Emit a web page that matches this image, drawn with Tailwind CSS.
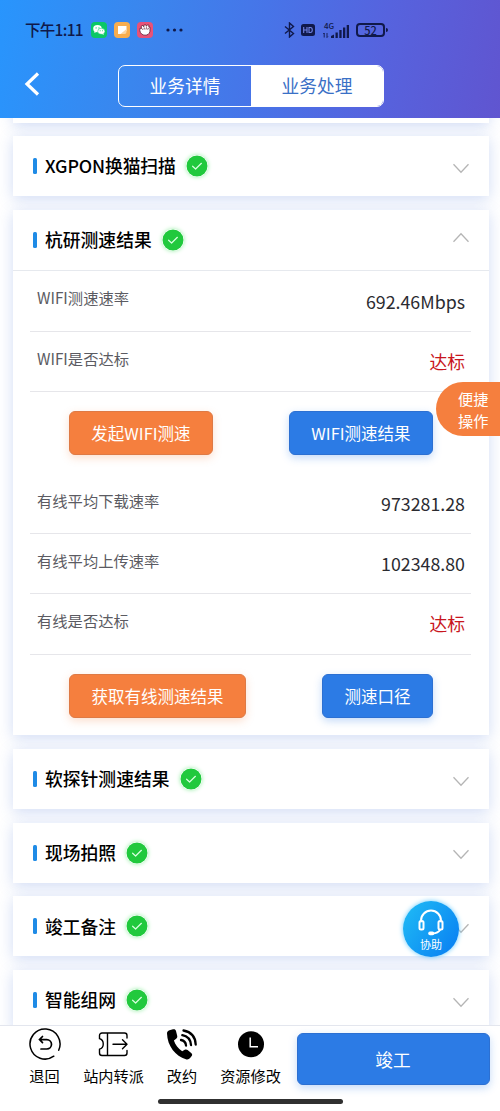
<!DOCTYPE html>
<html lang="zh-CN">
<head>
<meta charset="utf-8">
<title>业务处理</title>
<script src="https://cdn.jsdelivr.net/npm/@tailwindcss/browser@4"></script>
</head>
<body class="bg-white">
<svg class="hidden">
  <symbol id="check" viewBox="0 0 22 22"><circle cx="11" cy="11" r="10.5" fill="#21c93d"/><path d="M6.600 11.200l3 2.800 5.800-5.700" fill="none" stroke="#d9ffe0" stroke-width="1.200" stroke-linecap="round" stroke-linejoin="round"/></symbol>
  <symbol id="down" viewBox="0 0 18 11"><path d="M1.500 1.200L9 9.200l7.500-8" fill="none" stroke="#b5b5b5" stroke-width="1.300"/></symbol>
</svg>
<div class="relative flex h-[1111px] w-[500px] flex-col overflow-hidden bg-white font-['Noto_Sans_CJK_SC',sans-serif] text-black">
  <header class="h-[118px] shrink-0 bg-linear-[100deg,#2895fd_0%,#3a86ee_28%,#4774e8_52%,#5663de_75%,#6055d0_100%]">
    <div class="flex h-[60px] items-center pl-[25px] text-[#10194a]">
      <span class="w-[59px] text-[15.500px] leading-none font-medium tracking-[-0.700px] whitespace-nowrap">下午1:11</span>
      <div class="ml-[7px] flex items-center gap-[7px]">
        <svg class="size-4" viewBox="0 0 16 16"><rect width="16" height="16" rx="4" fill="#0bc866"/><ellipse cx="6.500" cy="6.700" rx="4.300" ry="3.600" fill="#fff"/><ellipse cx="10.300" cy="9.300" rx="3.600" ry="3" fill="#fff" stroke="#0bc866" stroke-width=".5"/><path d="M3.700 9l-.4 2 2-1zM12 11l1.200 1.700-2.500-.7z" fill="#fff"/><g fill="#0bc866"><circle cx="5.100" cy="5.900" r=".6"/><circle cx="8" cy="5.900" r=".6"/><circle cx="9.200" cy="8.700" r=".5"/><circle cx="11.500" cy="8.700" r=".5"/></g></svg>
        <svg class="size-4" viewBox="0 0 16 16"><rect width="16" height="16" rx="4" fill="#f8ad4e"/><path d="M4 4h8.500v4.500L9.500 12H4z" fill="#fff"/><path d="M6.500 12l6-5v3a2 2 0 0 1-2 2z" fill="#fbd6a3"/></svg>
        <svg class="size-4" viewBox="0 0 16 16"><rect width="16" height="16" rx="4" fill="#e85278"/><path d="M2.800 8.500L3 6.200l1.500.3-.3-2.300 1.600-.8 1 1.400L6.900 3l1.800-.3.700 1.600 1-1.500 1.600.5-.2 1.800 1.300.2-.2 4.200C12.500 12 10.500 13.200 8 13.200S3.200 11.500 2.800 8.500z" fill="#fff" stroke="#642135" stroke-width=".8"/><path d="M5 6.500l.8 1.300M7.200 5.500v2M9.500 5.300L9 7.500M11.400 6l-.7 1.700" stroke="#642135" stroke-width=".8"/></svg>
      </div>
      <svg class="ml-[13px] h-1 w-[17px]" viewBox="0 0 17 4" fill="currentColor"><circle cx="2" cy="2" r="1.600"/><circle cx="8.500" cy="2" r="1.600"/><circle cx="15" cy="2" r="1.600"/></svg>
      <svg class="ml-[101px] h-4 w-[11px]" viewBox="0 0 11 16" fill="none" stroke="currentColor" stroke-width="1.400"><path d="M1 4.500l8.500 7L5.500 15V1l4 3.500-8.500 7"/></svg>
      <svg class="ml-[6px] h-3 w-[14px]" viewBox="0 0 14 12"><rect width="14" height="12" rx="2.500" fill="currentColor"/><path d="M2.700 3v6M6 3v6M2.700 6H6M8 3.500v5h1.400c2.500 0 2.500-5 0-5z" fill="none" stroke="#7183e4" stroke-width="1.100"/></svg>
      <div class="ml-2 flex h-[15px] w-[27px] flex-col">
        <span class="h-[6px] pl-[1px] text-[8px] leading-[5px] font-medium">4G</span>
        <svg class="-mt-[5px] h-[14px] w-[27px] shrink-0" viewBox="0 0 27 14" fill="currentColor"><path d="M1.200 9v4.500M.3 10l.9-1M4 9v4.500m0 0l.9-1" stroke="currentColor" stroke-width=".9"/><path d="M8 14v-2l3-1.500V14z"/><rect x="12.500" y="8.500" width="2.300" height="5.500"/><rect x="16.300" y="6" width="2.300" height="8"/><rect x="20" y="3.500" width="2.300" height="10.500"/><rect x="23.700" y="1" width="2.300" height="13"/></svg>
      </div>
      <div class="ml-[6px] flex h-[14px] w-[29px] items-center justify-center rounded-[4px] border-2 border-current text-[11px] leading-none font-medium">52</div>
      <div class="ml-[1px] h-1 w-[2px] rounded-r bg-current"></div>
    </div>
    <div class="flex items-center pt-[5px] pl-[24px]">
      <svg class="mb-[5px] h-6 w-4" viewBox="0 0 16 24" fill="none" stroke="#fff" stroke-width="3.200"><path d="M14 1.500L3 12l11 10.500"/></svg>
      <div class="ml-[78px] flex h-[42px] w-[266px] overflow-hidden rounded-[7px] border border-white text-[17.700px]">
        <div class="flex w-[132px] items-center justify-center pb-[1px] text-white">业务详情</div>
        <div class="flex flex-1 items-center justify-center bg-white pb-[1px] text-[#3a70c6]">业务处理</div>
      </div>
    </div>
  </header>

  <main class="flex h-[907px] shrink-0 flex-col gap-[13.700px] overflow-hidden pr-[11px] pl-[13px]">
    <section class="-mt-[14px] h-[18.500px] shrink-0 bg-white shadow-[0_3px_14px_rgba(70,115,215,0.25)]"></section>

    <section class="flex h-[60px] shrink-0 items-center bg-white pr-[19px] pl-[20px] shadow-[0_3px_14px_rgba(70,115,215,0.25)]">
      <i class="h-4 w-1 rounded-[1.500px] bg-[#1f8be6]"></i>
      <h2 class="ml-2 text-[17.800px] leading-none font-medium tracking-[-0.120px]">XGPON换猫扫描</h2>
      <svg class="ml-[10px] size-[22px] rounded-full shadow-[0_0_4px_#9beeaa]"><use href="#check"/></svg>
      <svg class="mt-1 ml-auto h-[11px] w-[18px]"><use href="#down"/></svg>
    </section>

    <section class="h-[525.500px] shrink-0 bg-white shadow-[0_3px_14px_rgba(70,115,215,0.25)]">
      <div class="flex h-[61px] items-center border-b border-[#e6e9ee] pr-[19px] pl-[20px]">
        <i class="h-4 w-1 rounded-[1.500px] bg-[#1f8be6]"></i>
        <h2 class="ml-2 text-[17.800px] leading-none font-medium">杭研测速结果</h2>
        <svg class="ml-[10px] size-[22px] rounded-full shadow-[0_0_4px_#9beeaa]"><use href="#check"/></svg>
        <svg class="mb-1 ml-auto h-[11px] w-[18px] rotate-180"><use href="#down"/></svg>
      </div>
      <div class="pt-[0.800px] pr-[18px] pl-[17px]">
        <div class="flex h-[60.300px] justify-between border-b border-[#e6e6ea] pr-[6px] pl-[7px]"><span class="pt-[14.700px] text-[15.300px] leading-[22px] text-[#5b5b62]">WIFI测速速率</span><span class="pt-[16px] text-[17.800px] leading-[26px] text-[#2b2b30]">692.46Mbps</span></div>
        <div class="flex h-[60.300px] justify-between border-b border-[#e6e6ea] pr-[6px] pl-[7px]"><span class="pt-[14.700px] text-[15.300px] leading-[22px] text-[#5b5b62]">WIFI是否达标</span><span class="pt-[16px] text-[17.800px] leading-[26px] text-[#c8161d]">达标</span></div>
        <div class="flex h-[81.600px] items-start justify-between pt-[19px] pr-[38px] pl-[39px] text-[16.500px] text-white">
          <div class="flex h-[44px] w-[144px] items-center justify-center rounded-[6px] border border-[#de7a45] bg-[#f57f3e] shadow-[0_3px_8px_rgba(245,127,62,0.25)]">发起WIFI测速</div>
          <div class="flex h-[44px] w-[144px] items-center justify-center rounded-[6px] border border-[#2c70d2] bg-[#2c7be5] shadow-[0_3px_8px_rgba(44,123,229,0.28)]">WIFI测速结果</div>
        </div>
        <div class="flex h-[60.300px] justify-between border-b border-[#e6e6ea] pr-[6px] pl-[7px]"><span class="pt-[14.700px] text-[15.300px] leading-[22px] text-[#5b5b62]">有线平均下载速率</span><span class="pt-[16px] text-[17.800px] leading-[26px] text-[#2b2b30]">973281.28</span></div>
        <div class="flex h-[60.300px] justify-between border-b border-[#e6e6ea] pr-[6px] pl-[7px]"><span class="pt-[14.700px] text-[15.300px] leading-[22px] text-[#5b5b62]">有线平均上传速率</span><span class="pt-[16px] text-[17.800px] leading-[26px] text-[#2b2b30]">102348.80</span></div>
        <div class="flex h-[60.300px] justify-between border-b border-[#e6e6ea] pr-[6px] pl-[7px]"><span class="pt-[14.700px] text-[15.300px] leading-[22px] text-[#5b5b62]">有线是否达标</span><span class="pt-[16px] text-[17.800px] leading-[26px] text-[#c8161d]">达标</span></div>
        <div class="flex items-start justify-between pt-[19.200px] pr-[38px] pl-[39px] text-[16.500px] text-white">
          <div class="flex h-[44px] w-[177px] items-center justify-center rounded-[6px] border border-[#de7a45] bg-[#f57f3e] shadow-[0_3px_8px_rgba(245,127,62,0.25)]">获取有线测速结果</div>
          <div class="flex h-[44px] w-[111px] items-center justify-center rounded-[6px] border border-[#2c70d2] bg-[#2c7be5] shadow-[0_3px_8px_rgba(44,123,229,0.28)]">测速口径</div>
        </div>
      </div>
    </section>

    <section class="flex h-[60px] shrink-0 items-center bg-white pr-[19px] pl-[20px] shadow-[0_3px_14px_rgba(70,115,215,0.25)]">
      <i class="h-4 w-1 rounded-[1.500px] bg-[#1f8be6]"></i>
      <h2 class="ml-2 text-[17.800px] leading-none font-medium">软探针测速结果</h2>
      <svg class="ml-[11px] size-[22px] rounded-full shadow-[0_0_4px_#9beeaa]"><use href="#check"/></svg>
      <svg class="mt-1 ml-auto h-[11px] w-[18px]"><use href="#down"/></svg>
    </section>
    <section class="flex h-[60px] shrink-0 items-center bg-white pr-[19px] pl-[20px] shadow-[0_3px_14px_rgba(70,115,215,0.25)]">
      <i class="h-4 w-1 rounded-[1.500px] bg-[#1f8be6]"></i>
      <h2 class="ml-2 text-[17.800px] leading-none font-medium">现场拍照</h2>
      <svg class="ml-[10px] size-[22px] rounded-full shadow-[0_0_4px_#9beeaa]"><use href="#check"/></svg>
      <svg class="mt-1 ml-auto h-[11px] w-[18px]"><use href="#down"/></svg>
    </section>
    <section class="flex h-[60px] shrink-0 items-center bg-white pr-[19px] pl-[20px] shadow-[0_3px_14px_rgba(70,115,215,0.25)]">
      <i class="h-4 w-1 rounded-[1.500px] bg-[#1f8be6]"></i>
      <h2 class="ml-2 text-[17.800px] leading-none font-medium">竣工备注</h2>
      <svg class="ml-[10px] size-[22px] rounded-full shadow-[0_0_4px_#9beeaa]"><use href="#check"/></svg>
      <svg class="mt-1 ml-auto h-[11px] w-[18px]"><use href="#down"/></svg>
    </section>
    <section class="flex h-[60px] shrink-0 items-center bg-white pr-[19px] pl-[20px] shadow-[0_3px_14px_rgba(70,115,215,0.25)]">
      <i class="h-4 w-1 rounded-[1.500px] bg-[#1f8be6]"></i>
      <h2 class="ml-2 text-[17.800px] leading-none font-medium">智能组网</h2>
      <svg class="ml-[10px] size-[22px] rounded-full shadow-[0_0_4px_#9beeaa]"><use href="#check"/></svg>
      <svg class="mt-1 ml-auto h-[11px] w-[18px]"><use href="#down"/></svg>
    </section>
  </main>

  <footer class="flex flex-1 flex-col border-t border-[#e3e6ee] bg-white">
    <div class="flex h-[73px] text-[15.200px] leading-[22px] whitespace-nowrap">
      <div class="ml-[29px] flex w-[31px] flex-col items-center pt-[2px]">
        <svg class="size-8 shrink-0" viewBox="0 0 32 32" fill="none" stroke="#000" stroke-width="1.500" stroke-linecap="round"><path d="M24.800 28.200A15 15 0 1 1 29.700 22.200"/><path d="M13.500 8.500l-3 3.100 3 3.100M10.800 11.600h7a4.700 4.700 0 0 1 0 9.400H12" stroke-width="1.700"/></svg>
        <span class="mt-[4px]">退回</span>
      </div>
      <div class="ml-[23px] flex w-[61px] flex-col items-center pt-[2px]">
        <svg class="mr-[2px] h-8 w-8 shrink-0" viewBox="0 0 32 32" fill="none" stroke="#000" stroke-width="1.400" stroke-linecap="round" stroke-linejoin="round"><path d="M30 10V7.500a2.500 2.500 0 0 0-2.500-2.500H5a2.500 2.500 0 0 0-2.500 2.500v3.200c5 1.500 5 9 0 10.500V25A2.500 2.500 0 0 0 5 27.500h22.500A2.500 2.500 0 0 0 30 25v-2.500M10.500 5v22.500M16 16.200h13.500M25.500 11.700l4.500 4.500-4.500 4.500"/></svg>
        <span class="mt-[4px]">站内转派</span>
      </div>
      <div class="ml-[22px] flex w-[32px] flex-col items-center pt-[2px]">
        <svg class="size-8 shrink-0" viewBox="0 0 32 32"><path d="M3.500 2.300L7 1.300c1.600-.4 2.600.3 3 1.700l1.200 4.800c.3 1.200-.1 2.200-1 2.900l-2.300 1.800c1.500 4.500 4.200 8 8.300 10.800l2.500-1.500c1-.6 2-.5 2.900.2l3.600 2.900c1.100.9 1.300 2 .5 3.100l-1.600 2c-1 1.300-2.600 1.700-4.200 1.200C9.500 28.300 1.400 18 1 5.500c0-1.600.9-2.800 2.500-3.200z"/><g fill="none" stroke="#000" stroke-width="2.300" stroke-linecap="round"><path d="M17.500 2.500c7.200 1.300 11.800 6 12.200 14M16.300 7.200c5 .9 8.200 4 8.700 9.800M15 12c2.900.6 4.800 2.500 5 5.500"/></g></svg>
        <span class="mt-[4px]">改约</span>
      </div>
      <div class="ml-[22px] flex w-[61px] flex-col items-center pt-[2px]">
        <svg class="size-8 shrink-0" viewBox="0 0 32 32"><circle cx="16" cy="16.300" r="13"/><path d="M15.200 9.500v9.300h7.800" fill="none" stroke="#fff" stroke-width="1.500"/></svg>
        <span class="mt-[4px]">资源修改</span>
      </div>
      <div class="mt-[7px] ml-[15.500px] flex h-[52px] w-[193px] items-center justify-center rounded-[6px] border border-[#2c70d2] bg-[#2c7be5] pb-[1px] text-[17.700px] text-white shadow-[0_3px_8px_rgba(44,123,229,0.28)]">竣工</div>
    </div>
    <div class="mx-auto h-[5px] w-[185px] rounded-full bg-[#303030]"></div>
  </footer>

  <div class="absolute top-[382px] right-0 flex h-[54px] w-[64px] items-center rounded-l-full bg-[#f57f3e] pb-[1px] pl-[22px] text-[15.200px] leading-[22px] text-white"><span class="w-[31px]">便捷操作</span></div>
  <div class="absolute top-[901px] left-[403px] flex size-14 flex-col items-center rounded-full bg-linear-[125deg,#20bdf5,#087cf2] pt-[8px] text-white shadow-[0_0_5px_#65cafc]">
    <svg class="h-[27px] w-[26px]" viewBox="0 0 26 27" fill="none" stroke="#fff" stroke-width="2" stroke-linecap="round"><path d="M3 12.500v-1a10 10 0 0 1 20 0v1"/><rect x="1.500" y="12" width="4" height="8.500" rx="1.500"/><rect x="20.500" y="12" width="4" height="8.500" rx="1.500"/><path d="M22 21c-1.500 2.300-4 3.200-7 3.400"/><path d="M12 24.400h2.500" stroke-width="3.600"/></svg>
    <span class="text-[11px] leading-[16px]">协助</span>
  </div>
</div>
</body>
</html>
